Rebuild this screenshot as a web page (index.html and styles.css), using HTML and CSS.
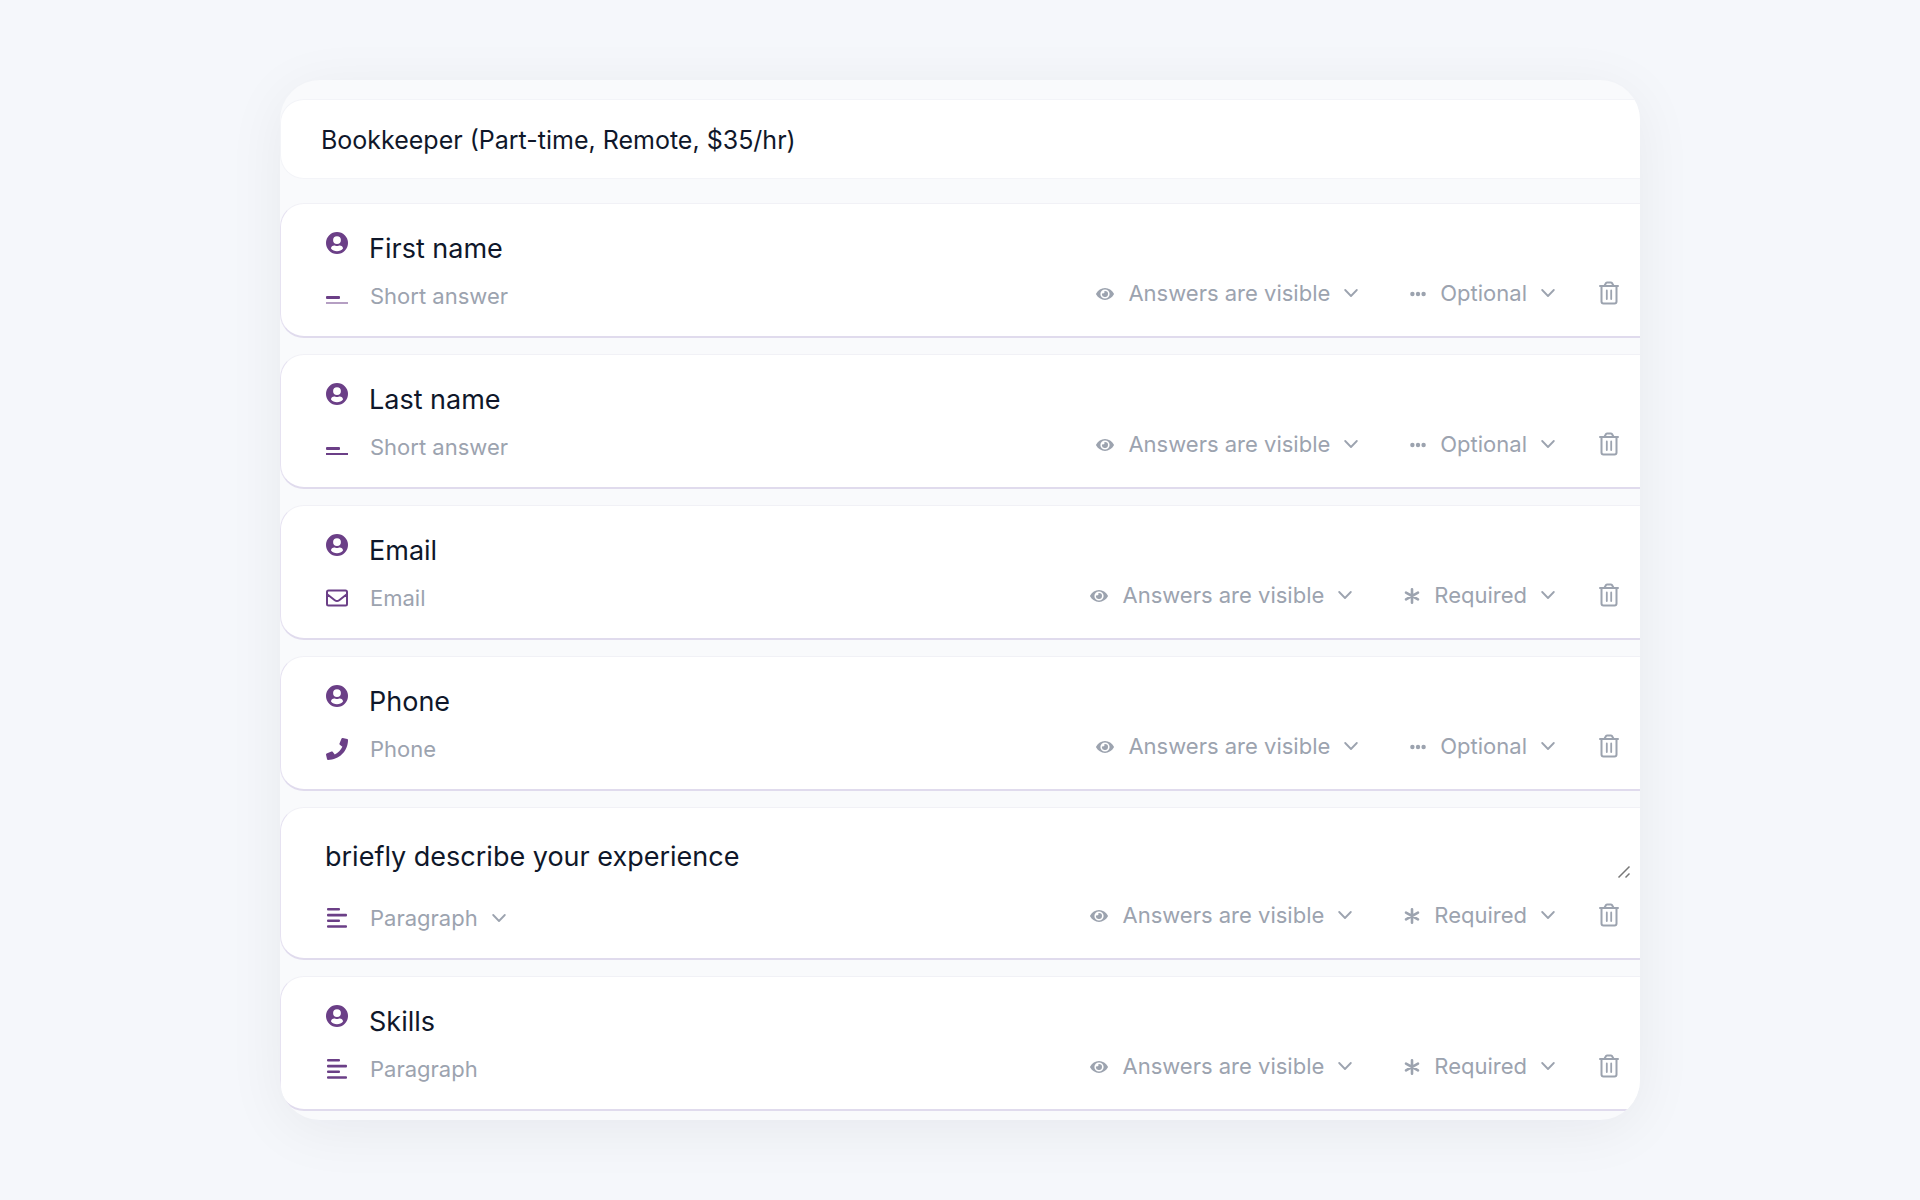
FILE: index.html
```html
<!DOCTYPE html>
<html lang="en">

<head>
    <meta charset="UTF-8">
    <meta name="viewport" content="width=device-width, initial-scale=1.0">
    <title>Bookkeeper application form</title>
    <link rel="stylesheet" href="styles.css">
</head>

<body>

    <!-- Shared icons -->
    <svg class="sprite" aria-hidden="true">
        <symbol id="icon-user" viewBox="0 0 22 22">
            <path fill-rule="evenodd" d="M11 0a11 11 0 1 0 0 22a11 11 0 0 0 0-22zM11 4.2a3.9 3.9 0 1 1 0 7.8a3.9 3.9 0 0 1 0-7.8zM5 16.6c0-1.9 1.6-3 3.2-3c.9 0 1.400.5 2.800.5s1.900-.5 2.800-.5c1.600 0 3.200 1.100 3.200 3c-1.400 1.700-3.500 2.700-6 2.700s-4.600-1-6-2.700z" />
        </symbol>
        <symbol id="icon-short" viewBox="0 0 22 22">
            <rect x="0" y="11" width="14" height="3" rx="1" />
            <rect x="0" y="17" width="22" height="2" />
        </symbol>
        <symbol id="icon-short-light" viewBox="0 0 22 22">
            <rect x="0" y="11" width="14" height="3" rx="1" />
            <rect x="0" y="17" width="22" height="2" opacity="0.5" />
        </symbol>
        <symbol id="icon-mail" viewBox="0 0 22 22">
            <path fill="none" stroke="currentColor" stroke-width="2" stroke-linejoin="round" d="M2.500 3.500h17a1.500 1.500 0 0 1 1.500 1.500v12a1.500 1.500 0 0 1-1.500 1.500h-17a1.500 1.500 0 0 1-1.500-1.500v-12a1.500 1.500 0 0 1 1.500-1.500zM1.500 7.500l7.300 5.700c1.500 1.200 2.900 1.200 4.400 0l7.300-5.700" />
        </symbol>
        <symbol id="icon-phone" viewBox="0 0 512 512">
            <path d="M493.400 24.600l-104-24c-11.300-2.600-22.900 3.300-27.500 13.900l-48 112c-4.200 9.800-1.400 21.300 6.900 28l60.600 49.600c-36 76.700-98.900 140.500-177.200 177.200l-49.600-60.600c-6.800-8.300-18.200-11.100-28-6.900l-112 48C3.900 366.500-2 378.100.6 389.400l24 104C27.100 504.200 36.700 512 48 512c256.100 0 464-207.500 464-464 0-11.200-7.700-20.900-18.600-23.400z" />
        </symbol>
        <symbol id="icon-lines" viewBox="0 0 22 22">
            <rect x="1" y="1" width="13" height="2.600" rx="1" />
            <rect x="1" y="6.800" width="20" height="2.600" rx="1" />
            <rect x="1" y="12.500" width="13" height="2.600" rx="1" />
            <rect x="1" y="18.200" width="20" height="2.600" rx="1" />
        </symbol>
        <symbol id="icon-eye" viewBox="0 0 18 18">
            <path fill-rule="evenodd" d="M9 4c3.800 0 7 2.300 8.800 5.400c.2.400.2.800 0 1.200C16 13.700 12.800 16 9 16S2 13.700.2 10.600a1.200 1.200 0 0 1 0-1.200C2 6.300 5.200 4 9 4zM9 5.400a4.600 4.600 0 1 0 0 9.200a4.600 4.600 0 0 0 0-9.200zM9 7a3 3 0 1 1-2.900 2.200a1.500 1.500 0 0 0 2.100-2.100A3 3 0 0 1 9 7z" />
        </symbol>
        <symbol id="icon-dots" viewBox="0 0 16 18">
            <circle cx="2.400" cy="10" r="2.200" />
            <circle cx="8" cy="10" r="2.200" />
            <circle cx="13.600" cy="10" r="2.200" />
        </symbol>
        <symbol id="icon-asterisk" viewBox="0 0 16 18">
            <path fill="none" stroke="currentColor" stroke-width="2.600" stroke-linecap="round" d="M8 3.300v13.400M2 6.600l12 6.800M14 6.600l-12 6.800" />
        </symbol>
        <symbol id="icon-chevron" viewBox="0 0 14 14">
            <path fill="none" stroke="currentColor" stroke-width="1.800" stroke-linecap="round" stroke-linejoin="round" d="M1.200 4l5.800 6l5.800-6" />
        </symbol>
        <symbol id="icon-trash" viewBox="0 0 20 24">
            <path fill="none" stroke="currentColor" stroke-width="2" stroke-linecap="round" stroke-linejoin="round" d="M1 5h18M2.500 5v15.500a2 2 0 0 0 2 2h11a2 2 0 0 0 2-2V5M5.500 4.800l1.200-2.300a1.500 1.500 0 0 1 1.300-.9h4a1.500 1.500 0 0 1 1.300.9l1.200 2.300" />
            <path fill="none" stroke="currentColor" stroke-width="1.800" stroke-linecap="round" d="M7.800 9.500v8.500M12.200 9.500v8.500" />
        </symbol>
    </svg>

    <main class="form-panel">
        <input type="text" class="form-title" aria-label="Form title" value="Bookkeeper (Part-time, Remote, $35/hr)">

        <section class="question">
            <div class="question-head">
                <svg class="icon"><use href="#icon-user" /></svg>
                <h2>First name</h2>
            </div>
            <div class="question-foot">
                <div class="question-type">
                    <svg class="icon"><use href="#icon-short-light" /></svg>
                    <span>Short answer</span>
                </div>
                <div class="controls">
                    <label class="dropdown">
                        <svg class="icon-eye"><use href="#icon-eye" /></svg>
                        <select aria-label="Answer visibility">
                            <option>Answers are visible</option>
                            <option>Answers are hidden</option>
                        </select>
                        <svg class="chevron"><use href="#icon-chevron" /></svg>
                    </label>
                    <label class="dropdown">
                        <svg class="icon-state"><use href="#icon-dots" /></svg>
                        <select aria-label="Optional or required">
                            <option selected>Optional</option>
                            <option>Required</option>
                        </select>
                        <svg class="chevron"><use href="#icon-chevron" /></svg>
                    </label>
                    <button type="button" class="delete" aria-label="Delete question"><svg><use href="#icon-trash" /></svg></button>
                </div>
            </div>
        </section>

        <section class="question">
            <div class="question-head">
                <svg class="icon"><use href="#icon-user" /></svg>
                <h2>Last name</h2>
            </div>
            <div class="question-foot">
                <div class="question-type">
                    <svg class="icon"><use href="#icon-short" /></svg>
                    <span>Short answer</span>
                </div>
                <div class="controls">
                    <label class="dropdown">
                        <svg class="icon-eye"><use href="#icon-eye" /></svg>
                        <select aria-label="Answer visibility">
                            <option>Answers are visible</option>
                            <option>Answers are hidden</option>
                        </select>
                        <svg class="chevron"><use href="#icon-chevron" /></svg>
                    </label>
                    <label class="dropdown">
                        <svg class="icon-state"><use href="#icon-dots" /></svg>
                        <select aria-label="Optional or required">
                            <option selected>Optional</option>
                            <option>Required</option>
                        </select>
                        <svg class="chevron"><use href="#icon-chevron" /></svg>
                    </label>
                    <button type="button" class="delete" aria-label="Delete question"><svg><use href="#icon-trash" /></svg></button>
                </div>
            </div>
        </section>

        <section class="question">
            <div class="question-head">
                <svg class="icon"><use href="#icon-user" /></svg>
                <h2>Email</h2>
            </div>
            <div class="question-foot">
                <div class="question-type">
                    <svg class="icon"><use href="#icon-mail" /></svg>
                    <span>Email</span>
                </div>
                <div class="controls">
                    <label class="dropdown">
                        <svg class="icon-eye"><use href="#icon-eye" /></svg>
                        <select aria-label="Answer visibility">
                            <option>Answers are visible</option>
                            <option>Answers are hidden</option>
                        </select>
                        <svg class="chevron"><use href="#icon-chevron" /></svg>
                    </label>
                    <label class="dropdown">
                        <svg class="icon-state"><use href="#icon-asterisk" /></svg>
                        <select aria-label="Optional or required">
                            <option>Optional</option>
                            <option selected>Required</option>
                        </select>
                        <svg class="chevron"><use href="#icon-chevron" /></svg>
                    </label>
                    <button type="button" class="delete" aria-label="Delete question"><svg><use href="#icon-trash" /></svg></button>
                </div>
            </div>
        </section>

        <section class="question">
            <div class="question-head">
                <svg class="icon"><use href="#icon-user" /></svg>
                <h2>Phone</h2>
            </div>
            <div class="question-foot">
                <div class="question-type">
                    <svg class="icon"><use href="#icon-phone" /></svg>
                    <span>Phone</span>
                </div>
                <div class="controls">
                    <label class="dropdown">
                        <svg class="icon-eye"><use href="#icon-eye" /></svg>
                        <select aria-label="Answer visibility">
                            <option>Answers are visible</option>
                            <option>Answers are hidden</option>
                        </select>
                        <svg class="chevron"><use href="#icon-chevron" /></svg>
                    </label>
                    <label class="dropdown">
                        <svg class="icon-state"><use href="#icon-dots" /></svg>
                        <select aria-label="Optional or required">
                            <option selected>Optional</option>
                            <option>Required</option>
                        </select>
                        <svg class="chevron"><use href="#icon-chevron" /></svg>
                    </label>
                    <button type="button" class="delete" aria-label="Delete question"><svg><use href="#icon-trash" /></svg></button>
                </div>
            </div>
        </section>

        <section class="question question-custom">
            <div class="question-text">
                <textarea rows="1" aria-label="Question text">briefly describe your experience</textarea>
                <svg class="grip" viewBox="0 0 14 14" aria-hidden="true">
                    <path d="M1.500 12.500l11-11M8.500 12.500l4-4" />
                </svg>
            </div>
            <div class="question-foot">
                <label class="question-type">
                    <svg class="icon"><use href="#icon-lines" /></svg>
                    <select aria-label="Answer type">
                        <option selected>Paragraph</option>
                        <option>Short answer</option>
                    </select>
                    <svg class="chevron"><use href="#icon-chevron" /></svg>
                </label>
                <div class="controls">
                    <label class="dropdown">
                        <svg class="icon-eye"><use href="#icon-eye" /></svg>
                        <select aria-label="Answer visibility">
                            <option>Answers are visible</option>
                            <option>Answers are hidden</option>
                        </select>
                        <svg class="chevron"><use href="#icon-chevron" /></svg>
                    </label>
                    <label class="dropdown">
                        <svg class="icon-state"><use href="#icon-asterisk" /></svg>
                        <select aria-label="Optional or required">
                            <option>Optional</option>
                            <option selected>Required</option>
                        </select>
                        <svg class="chevron"><use href="#icon-chevron" /></svg>
                    </label>
                    <button type="button" class="delete" aria-label="Delete question"><svg><use href="#icon-trash" /></svg></button>
                </div>
            </div>
        </section>

        <section class="question">
            <div class="question-head">
                <svg class="icon"><use href="#icon-user" /></svg>
                <h2>Skills</h2>
            </div>
            <div class="question-foot">
                <div class="question-type">
                    <svg class="icon"><use href="#icon-lines" /></svg>
                    <span>Paragraph</span>
                </div>
                <div class="controls">
                    <label class="dropdown">
                        <svg class="icon-eye"><use href="#icon-eye" /></svg>
                        <select aria-label="Answer visibility">
                            <option>Answers are visible</option>
                            <option>Answers are hidden</option>
                        </select>
                        <svg class="chevron"><use href="#icon-chevron" /></svg>
                    </label>
                    <label class="dropdown">
                        <svg class="icon-state"><use href="#icon-asterisk" /></svg>
                        <select aria-label="Optional or required">
                            <option>Optional</option>
                            <option selected>Required</option>
                        </select>
                        <svg class="chevron"><use href="#icon-chevron" /></svg>
                    </label>
                    <button type="button" class="delete" aria-label="Delete question"><svg><use href="#icon-trash" /></svg></button>
                </div>
            </div>
        </section>
    </main>

</body>

</html>
```

FILE: styles.css
```css
/* --- Basic Page Styles --- */
* {
    box-sizing: border-box;
}

body {
    margin: 0;
    min-height: 100vh;
    padding: 40px;
    display: flex;
    justify-content: center;
    align-items: center;
    background-color: #f5f7fb;
    color: #0f172a;
    font-family: Inter, "Liberation Sans", sans-serif;
}

input,
textarea,
select,
button {
    font: inherit;
    color: inherit;
    border: 0;
    border-radius: 0;
    margin: 0;
    padding: 0;
    background: none;
}

svg {
    display: block;
    flex-shrink: 0;
    fill: currentColor;
}

.sprite {
    position: absolute;
    width: 0;
    height: 0;
}

/* --- Panel --- */
.form-panel {
    width: 100%;
    max-width: 1360px;
    padding: 19px 0 9px;
    display: flex;
    flex-direction: column;
    gap: 16px;
    overflow: hidden;
    border-radius: 40px;
    background-color: #f9fafc;
    box-shadow: 0 10px 60px rgba(15, 15, 40, 0.06);
}

.form-title {
    width: 100%;
    height: 80px;
    margin-bottom: 8px;
    padding: 2px 40px 0;
    border: 1px solid #f3f4f8;
    border-right: 0;
    border-radius: 24px 0 0 24px;
    background-color: #fff;
    font-size: 25px;
}

/* --- Question cards run off the right side of the panel --- */
.question {
    padding: 28px 21px 26px 45px;
    border: 1px solid #f1f1f6;
    border-left-color: #e6e2f1;
    border-bottom: 2px solid #e0dbed;
    border-right: 0;
    border-radius: 24px 0 0 24px;
    background-color: #fff;
}

.question-head {
    display: flex;
    align-items: flex-start;
    gap: 21px;
}

.question-head h2 {
    margin: 0;
    font-size: 27px;
    font-weight: 400;
    line-height: 34px;
}

.icon {
    width: 22px;
    height: 22px;
    color: #6b3f87;
}

.question-foot {
    margin-top: 13px;
    display: flex;
    justify-content: space-between;
    align-items: flex-start;
    color: #9ca3af;
    font-size: 22px;
    line-height: 28px;
}

.question-type {
    display: flex;
    align-items: center;
    gap: 22px;
    padding-top: 3px;
}

.question-type .chevron {
    margin-left: -8px;
}

/* --- Card with an editable question --- */
.question-custom {
    padding: 32px 9px 26px 44px;
}

.question-custom .question-foot {
    margin-top: 22px;
    padding: 0 12px 0 1px;
}

.question-text {
    position: relative;
}

.question-text textarea {
    display: block;
    width: 100%;
    height: 39px;
    font-size: 27px;
    line-height: 34px;
    resize: none;
    overflow: hidden;
}

.grip {
    position: absolute;
    right: 0;
    bottom: 0;
    width: 14px;
    height: 14px;
    fill: none;
    stroke: #777;
    stroke-width: 1.5;
}

/* --- Controls --- */
.controls,
.dropdown {
    display: flex;
    align-items: center;
}

.dropdown {
    gap: 14px;
    margin-right: 44px;
}

.dropdown:first-child {
    margin-right: 52px;
}

select {
    appearance: none;
    field-sizing: content;
    height: 28px;
    line-height: 28px;
}

.icon-eye {
    width: 18px;
    height: 18px;
}

.icon-state {
    width: 16px;
    height: 18px;
}

.chevron {
    width: 14px;
    height: 14px;
}

.delete {
    display: flex;
    cursor: pointer;
}

.delete svg {
    width: 20px;
    height: 24px;
}
```
